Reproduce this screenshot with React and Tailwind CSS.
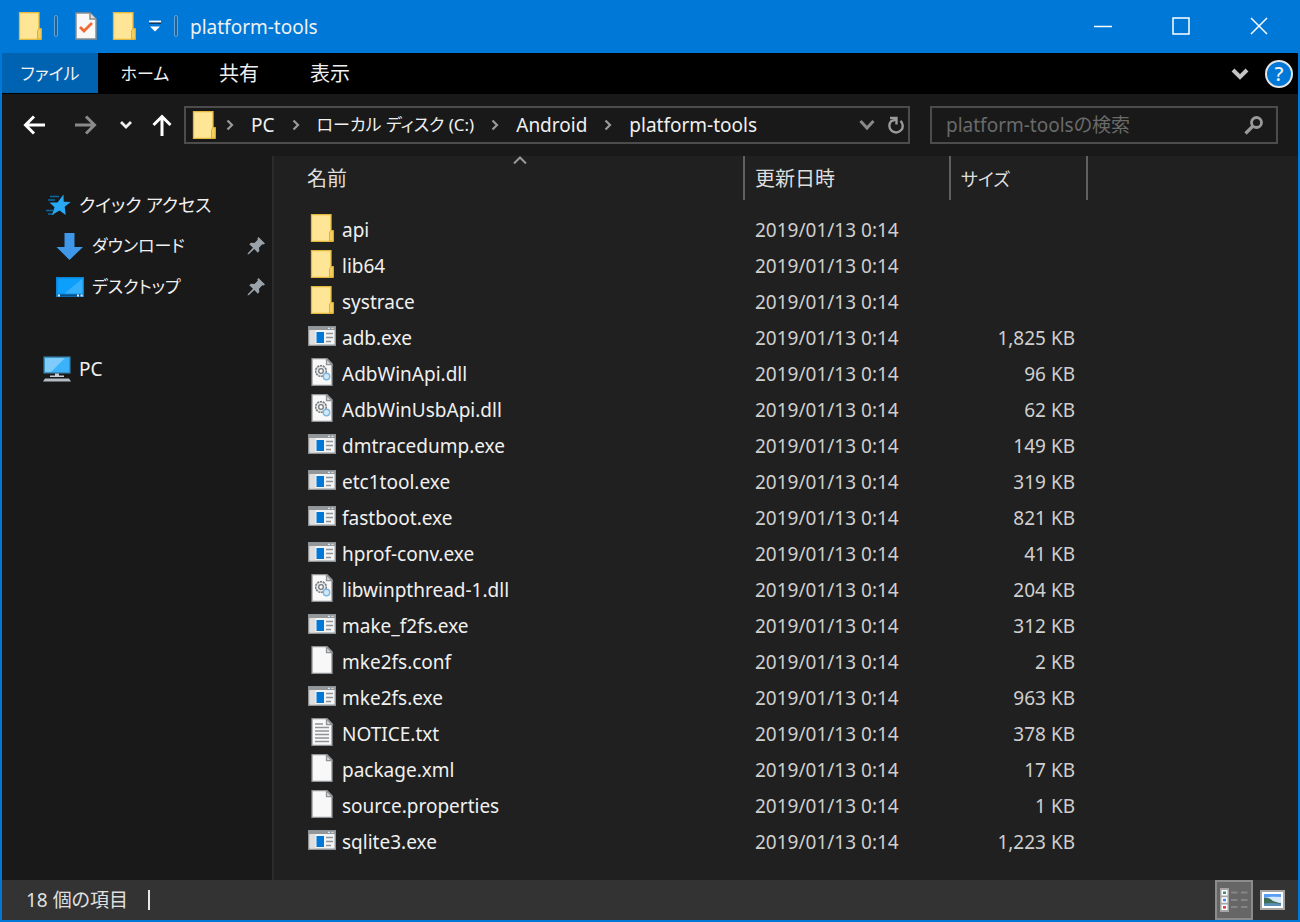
import { useState } from "react";

const MODIFIED = "2019/01/13 0:14";

const FILES = [
  { name: "api", type: "folder" },
  { name: "lib64", type: "folder" },
  { name: "systrace", type: "folder" },
  { name: "adb.exe", type: "exe", size: "1,825 KB" },
  { name: "AdbWinApi.dll", type: "dll", size: "96 KB" },
  { name: "AdbWinUsbApi.dll", type: "dll", size: "62 KB" },
  { name: "dmtracedump.exe", type: "exe", size: "149 KB" },
  { name: "etc1tool.exe", type: "exe", size: "319 KB" },
  { name: "fastboot.exe", type: "exe", size: "821 KB" },
  { name: "hprof-conv.exe", type: "exe", size: "41 KB" },
  { name: "libwinpthread-1.dll", type: "dll", size: "204 KB" },
  { name: "make_f2fs.exe", type: "exe", size: "312 KB" },
  { name: "mke2fs.conf", type: "blank", size: "2 KB" },
  { name: "mke2fs.exe", type: "exe", size: "963 KB" },
  { name: "NOTICE.txt", type: "text", size: "378 KB" },
  { name: "package.xml", type: "blank", size: "17 KB" },
  { name: "source.properties", type: "blank", size: "1 KB" },
  { name: "sqlite3.exe", type: "exe", size: "1,223 KB" },
];

const CRUMBS = [
  { label: "PC" },
  { label: "ローカル ディスク (C:)", kana: true },
  { label: "Android" },
  { label: "platform-tools" },
];

export default function App() {
  const [query, setQuery] = useState("");

  return (
    <div className="flex min-h-screen flex-col border-2 border-[#0078d7] bg-[#191919] font-['Noto_Sans','Noto_Sans_CJK_JP',sans-serif] text-[19px] leading-7 text-[#f0f0f0] [font-feature-settings:'palt']">
      <TitleBar />
      <MenuBar />
      <AddressBar query={query} onQueryChange={setQuery} />
      <div className="flex grow">
        <Sidebar />
        <main className="grow bg-[#202020]">
          <FileTable />
        </main>
      </div>
      <StatusBar />
    </div>
  );
}

function TitleBar() {
  return (
    <header className="flex h-[51px] items-center bg-[#0078d7]">
      <div className="flex grow items-center pb-1 pl-4">
        <FolderIcon />
        <Divider className="ml-3" />
        <button aria-label="プロパティ" className="ml-[17px]">
          <svg className="h-7 w-[22px]" viewBox="0 0 22 28">
            <path d="M1 1h14l6 6v20H1z" fill="#f8f8f8" stroke="#8c8c8c" strokeWidth="1.5" />
            <path d="M15 1v6h6" fill="#ddd" stroke="#8c8c8c" strokeWidth="1.5" />
            <path d="m5 15 4 4 8-8" fill="none" stroke="#f06a35" strokeWidth="2.8" />
          </svg>
        </button>
        <button aria-label="新しいフォルダー" className="ml-[15px]">
          <FolderIcon />
        </button>
        <button aria-label="カスタマイズ" className="ml-3">
          <svg className="h-3 w-[14px]" viewBox="0 0 14 12">
            <path d="M1 2.5h12" stroke="#063a6b" strokeWidth="3" />
            <path d="M1 1.5h12" stroke="#fff" strokeWidth="1.8" />
            <path d="M2 6.5h10L7 11.5z" fill="#fff" />
          </svg>
        </button>
        <Divider className="ml-3" />
        <h1 className="ml-3 pt-0.5">platform-tools</h1>
      </div>
      <div className="flex h-full pb-1">
        <WindowButton label="最小化" path="M0 9.5h18" />
        <WindowButton label="最大化" path="M1 1h16v16H1z" />
        <WindowButton label="閉じる" path="m1 1 16 16M17 1 1 17" />
      </div>
    </header>
  );
}

function Divider({ className }) {
  return (
    <span
      className={`h-[22px] w-1 rounded-sm border border-[#5fa4dc] bg-[#28608f] ${className}`}
    />
  );
}

function WindowButton({ label, path }) {
  return (
    <button aria-label={label} className="flex h-full w-[78px] items-center justify-center">
      <svg className="size-[18px]" viewBox="0 0 18 18" fill="none" stroke="#fff" strokeWidth="1.5">
        <path d={path} />
      </svg>
    </button>
  );
}

function MenuBar() {
  return (
    <nav className="flex h-[41px] items-start bg-black">
      <button className="h-10 w-24 bg-[#0063b1] pt-0.5 text-[17px]">ファイル</button>
      <button className="h-10 w-[94px] pt-0.5 text-[17px]">ホーム</button>
      <button className="h-10 w-[94px] pt-0.5 text-xl">共有</button>
      <button className="h-10 w-[88px] pt-0.5 text-xl">表示</button>
      <div className="flex h-10 grow items-center justify-end gap-4 pt-0.5 pr-[5px]">
        <button aria-label="リボンの展開">
          <svg className="h-3 w-[18px]" viewBox="0 0 18 12" fill="none" stroke="#c4c4c4" strokeWidth="4">
            <path d="m2 2 7 7 7-7" />
          </svg>
        </button>
        <button
          aria-label="ヘルプ"
          className="flex size-7 items-center justify-center rounded-full border-2 border-[#e4e4e4] bg-[#0078d7] text-xl font-medium"
        >
          ?
        </button>
      </div>
    </nav>
  );
}

function AddressBar({ query, onQueryChange }) {
  return (
    <div className="flex h-[62px] items-center pr-5 pl-[21px]">
      <button aria-label="戻る">
        <svg className="h-5 w-[22px]" viewBox="0 0 22 20" fill="none" stroke="#fff" strokeWidth="3">
          <path d="M11 1.5 2.5 10l8.5 8.5M2.5 10H22" />
        </svg>
      </button>
      <button aria-label="進む" className="ml-[30px]">
        <svg className="h-5 w-[22px]" viewBox="0 0 22 20" fill="none" stroke="#8a8a8a" strokeWidth="3">
          <path d="m11 1.5 8.5 8.5-8.5 8.5M19.5 10H0" />
        </svg>
      </button>
      <button aria-label="最近表示した場所" className="ml-[23px]">
        <svg className="h-2 w-3" viewBox="0 0 12 8" fill="none" stroke="#f0f0f0" strokeWidth="2.8">
          <path d="m1 1 5 5 5-5" />
        </svg>
      </button>
      <button aria-label="上へ" className="ml-5">
        <svg className="h-[22px] w-5" viewBox="0 0 20 22" fill="none" stroke="#fff" strokeWidth="3">
          <path d="M1.5 11 10 2.5l8.5 8.5M10 2.5V22" />
        </svg>
      </button>

      <div className="ml-3 flex h-[38px] grow items-center border-2 border-[#4c4c4c] pl-1.5">
        <FolderIcon />
        <div className="flex grow items-center gap-[17px] pl-2.5">
          {CRUMBS.map((crumb) => (
            <div key={crumb.label} className="flex items-center gap-[17px]">
              <svg className="h-3 w-2" viewBox="0 0 8 12" fill="none" stroke="#9a9a9a" strokeWidth="2.2">
                <path d="m1.5 1.5 4.5 4.5-4.5 4.5" />
              </svg>
              <a href="#" className={crumb.kana ? "text-[17px]" : ""}>
                {crumb.label}
              </a>
            </div>
          ))}
        </div>
        <button aria-label="履歴">
          <svg className="h-3 w-4" viewBox="0 0 16 12" fill="none" stroke="#8a8a8a" strokeWidth="3">
            <path d="m1.5 2 6.5 7 6.5-7" />
          </svg>
        </button>
        <button aria-label="最新の情報に更新" className="mr-[3px] ml-3">
          <svg className="size-[18px]" viewBox="0 0 18 18" fill="none" stroke="#9a9a9a" strokeWidth="2.4">
            <path d="M13.5 4.8A6.7 6.7 0 1 1 4.2 5.2L9 3.5" />
            <path d="M3 2h6.5v6.5" />
          </svg>
        </button>
      </div>

      <div className="ml-5 flex h-[38px] w-[348px] items-center border-2 border-[#4c4c4c] pr-3 pl-[14px]">
        <input
          type="text"
          aria-label="検索"
          placeholder="platform-toolsの検索"
          value={query}
          onChange={(e) => onQueryChange(e.target.value)}
          className="min-w-0 grow bg-transparent outline-none placeholder:text-[#6a6a6a]"
        />
        <svg className="size-5" viewBox="0 0 20 20" fill="none" stroke="#9a9a9a">
          <circle cx="12.5" cy="7.5" r="5" strokeWidth="2.8" />
          <path d="m8.5 11.5-7 7" strokeWidth="3.2" />
        </svg>
      </div>
    </div>
  );
}

function Sidebar() {
  return (
    <aside className="w-[272px] shrink-0 border-r-2 border-[#2b2b2b] pt-7">
      <a href="#" className="flex h-[41px] items-center gap-2 pl-[43px]">
        <svg className="h-[22px] w-[26px]" viewBox="0 0 26 22">
          <path d="M5 2.5h9M3 6h7M1 16.5h7M3 20h6" stroke="#0b6aa5" strokeWidth="1.5" />
          <path d="M18.5.5 18.7 7.7l7 .2-6 4.8 1 8.3-6.2-4.5L7 21l2.5-7.7-5-4.8h8z" fill="#29a9f5" />
        </svg>
        <span className="text-lg">クイック アクセス</span>
      </a>
      <a href="#" className="flex h-[41px] items-center gap-2 pr-[7px] pl-[54px]">
        <svg className="h-7 w-7" viewBox="0 0 28 28">
          <path d="M8.5 1h10v14H27L13.5 28 .5 15h8z" fill="#3f97ea" />
        </svg>
        <span className="grow text-[17px]">ダウンロード</span>
        <PinIcon />
      </a>
      <a href="#" className="flex h-[41px] items-center gap-2 pr-[7px] pl-[54px]">
        <svg className="h-7 w-7" viewBox="0 0 28 28">
          <path d="M0 4h28v20H0z" fill="#0a86d8" />
          <path d="M1.5 5.5h25v15h-25z" fill="#0c9ffb" />
          <path d="M26.5 5.5v15h-18z" fill="#35b0ff" />
          <path d="M2 22.5h24" stroke="#0b4f86" strokeWidth="2" />
          <path d="M2 22.5h2M21 22.5h2M24.5 22.5h2" stroke="#d9efff" strokeWidth="2" />
        </svg>
        <span className="grow text-[17px]">デスクトップ</span>
        <PinIcon />
      </a>
      <a href="#" className="mt-[41px] flex h-[42px] items-center gap-2 pl-[41px]">
        <svg className="h-[26px] w-7" viewBox="0 0 28 26">
          <path d="M.5.5h27v17H.5z" fill="#3b8fbd" />
          <path d="M2 2h24v14H2z" fill="#3bb3fa" />
          <path d="M2 2h20L8 16H2z" fill="#7fcbfa" />
          <path d="M12 17.5h4v2h5V21H7v-1.5h5z" fill="#c5cdd6" />
          <path d="M2 22.5h24l2 3H0z" fill="#b4bcc6" />
        </svg>
        <span>PC</span>
      </a>
    </aside>
  );
}

function FileTable() {
  return (
    <table className="w-[814px] table-fixed border-collapse text-left">
      <colgroup>
        <col className="w-[471px]" />
        <col className="w-[206px]" />
        <col className="w-[137px]" />
      </colgroup>
      <thead className="text-xl text-[#dedede]">
        <tr>
          <th className="relative p-0 pb-3 font-normal">
            <button className="flex h-11 w-full items-center border-r-2 border-[#606060] pt-0.5 pl-[33px]">
              名前
            </button>
            <svg
              className="absolute top-0 left-[238px] h-2 w-4"
              viewBox="0 0 16 8"
              fill="none"
              stroke="#9a9a9a"
              strokeWidth="2"
            >
              <path d="m2 7.5 6-6 6 6" />
            </svg>
          </th>
          <th className="p-0 pb-3 font-normal">
            <button className="flex h-11 w-full items-center border-r-2 border-[#606060] pt-0.5 pl-2.5">
              更新日時
            </button>
          </th>
          <th className="p-0 pb-3 font-normal">
            <button className="flex h-11 w-full items-center border-r-2 border-[#606060] pt-0.5 pl-2.5 text-lg">
              サイズ
            </button>
          </th>
        </tr>
      </thead>
      <tbody>
        {FILES.map((file) => (
          <tr key={file.name} className="h-9">
            <td className="p-0 pl-[34px]">
              <div className="flex h-9 items-center gap-1.5">
                <FileIcon type={file.type} />
                <span>{file.name}</span>
              </div>
            </td>
            <td className="p-0 pl-2.5 text-[#cfcfcf]">{MODIFIED}</td>
            <td className="p-0 pr-[13px] text-right text-[#cfcfcf]">{file.size}</td>
          </tr>
        ))}
      </tbody>
    </table>
  );
}

function StatusBar() {
  return (
    <footer className="flex h-10 items-center bg-[#333] pl-6 text-[#e0e0e0]">
      <span>18 個の項目</span>
      <span className="ml-5 h-5 w-0.5 bg-[#e8e8e8]" />
      <div className="flex grow items-center justify-end pr-[13px]">
        <button
          aria-label="詳細"
          className="flex h-10 w-[38px] items-center justify-center border-2 border-[#8c8c8c] bg-[#666]"
        >
          <svg className="h-6 w-7" viewBox="0 0 28 24">
            <path d="M0 0h9v24H0z" fill="#a5a5a5" />
            <path d="M1.5 2h6v5.5h-6zM1.5 9.3h6v5.5h-6zM1.5 16.6h6v5.5h-6z" fill="#fff" />
            <path d="M3 3.5h3V6H3z" fill="#3f8f68" />
            <path d="M3 10.8h3v2.5H3z" fill="#3c87f0" />
            <path d="M3 18.1h3v2.5H3z" fill="#d83b3b" />
            <path d="M11 4.5h6.5M21 4.5h6.5M11 12h6.5M21 12h6.5M11 19h6.5M21 19h6.5" stroke="#858585" strokeWidth="2" />
          </svg>
        </button>
        <button aria-label="大きい縮小版" className="ml-[7px]">
          <svg className="h-5 w-[25px]" viewBox="0 0 25 20">
            <path d="M1 1h23v18H1z" fill="#fff" stroke="#a5a5a5" strokeWidth="2" />
            <path d="M4 4h17v12H4z" fill="#5b9df5" />
            <path d="M4 8q6-2 17-1v6H4z" fill="#d5e9fb" />
            <path d="M4 8q5-1 9 3l8 2.5v1H4z" fill="#3f6d55" />
            <path d="M4 13.5q8-1 17 .5v2H4z" fill="#5b8fb8" />
          </svg>
        </button>
      </div>
    </footer>
  );
}

function FolderIcon() {
  return (
    <svg className="h-7 w-6 shrink-0" viewBox="0 0 24 28">
      <FolderShape />
    </svg>
  );
}

function FolderShape() {
  return (
    <>
      <path d="M1.5.7H21v16h2v10.6H1.5z" fill="#ffe596" stroke="#e3b93c" strokeWidth="1.3" />
      <path d="M19.5 27v-8.5l1.5-1.8h2.3V27z" fill="#f6cf5f" stroke="#dcae31" />
    </>
  );
}

function PinIcon() {
  return (
    <svg className="size-[18px] shrink-0" viewBox="0 0 18 18" fill="#9aa3aa">
      <path d="m11.5 0 6.5 6.5-1.5 1-1.2-.3-3.3 3.5.3 3.3-1.5 1.7-3.5-3.6L2 17l-1.5.5L1 16l5-5.2-3.7-3.6 1.6-1.4 3.5.2 3.4-3.3-.4-1.5z" />
    </svg>
  );
}

// Row icons fill the top 28px of a 32px box so they sit slightly above the text.
function FileIcon({ type }) {
  return (
    <svg className="h-8 w-7 shrink-0" viewBox="0 0 28 32">
      {type === "folder" && (
        <g transform="translate(2 0)">
          <FolderShape />
        </g>
      )}
      {type === "exe" && (
        <>
          <path d="M.7 4.7h26.6v18.6H.7z" fill="#f4f4f4" stroke="#8f9396" strokeWidth="1.4" />
          <path d="M1 5h26v3H1z" fill="#92979b" />
          <path d="M2 8h5.5v14.5H2z" fill="#dedede" />
          <path d="M20 6.3h2M23.5 6.3h2" stroke="#e3e3e3" strokeWidth="1.3" />
          <path d="M8.5 10H16v11H8.5z" fill="#0078d7" />
          <path d="M18 11.5h7M18 15.5h7M18 19.5h5" stroke="#8f9396" strokeWidth="1.5" />
        </>
      )}
      {["dll", "blank", "text"].includes(type) && (
        <>
          <path d="M4 .7h15l5 5v21.6H4z" fill="#f8f8f8" stroke="#8f9396" strokeWidth="1.3" />
          <path d="M18.5.7v6H24z" fill="#d8dadc" stroke="#8f9396" strokeWidth="1.3" />
        </>
      )}
      {type === "dll" && (
        <>
          <circle cx="13" cy="13" r="5.3" fill="#e8eaeb" stroke="#74797d" strokeWidth="1.5" strokeDasharray="2.2 .7" />
          <circle cx="13" cy="13" r="2.3" fill="#fff" stroke="#74797d" strokeWidth="1.3" />
          <circle cx="18.5" cy="18.5" r="3.2" fill="#cfe8fa" stroke="#83b7dc" strokeWidth="1.4" />
        </>
      )}
      {type === "text" && (
        <path d="M7 6h8M7 9.500h14M7 13h14M7 16.500h14M7 20h14M7 23.500h14" stroke="#8f9396" strokeWidth="1.3" />
      )}
    </svg>
  );
}
